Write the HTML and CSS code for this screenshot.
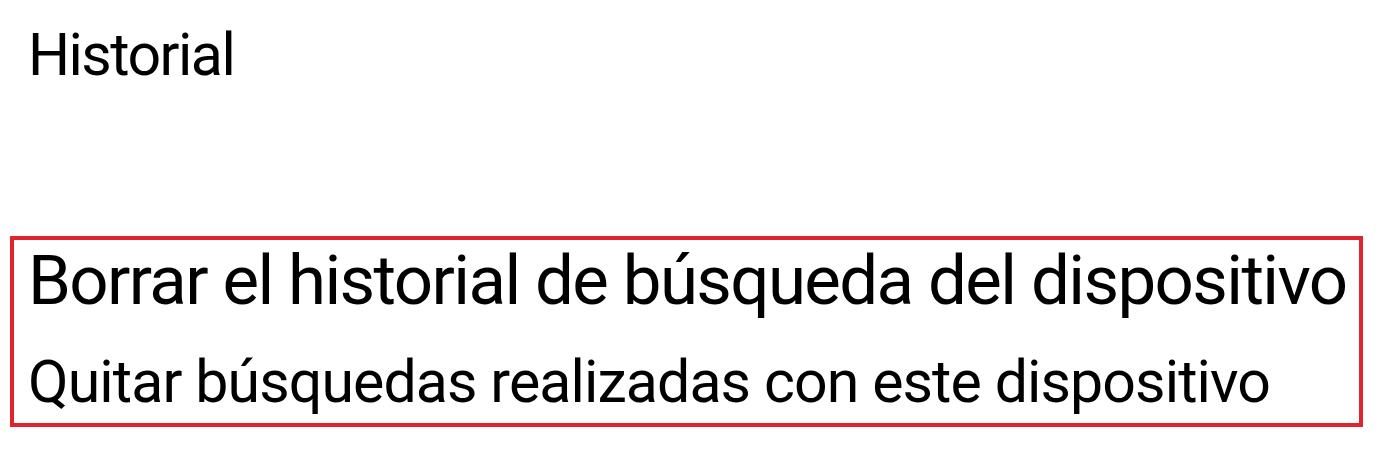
FILE: index.html
```html
<!DOCTYPE html>
<html lang="es">
<head>
    <meta charset="UTF-8">
    <meta name="viewport" content="width=device-width, initial-scale=1.0">
    <title>Historial</title>
    <link rel="stylesheet" href="styles.css">
</head>
<body>
    <h1 class="section-title">Historial</h1>

    <div class="pref-item">
        <div class="pref-title">Borrar el historial de búsqueda del dispositivo</div>
        <div class="pref-summary">Quitar búsquedas realizadas con este dispositivo</div>
    </div>
</body>
</html>
```

FILE: styles.css
```css
body { margin: 0; padding: 0; background: #fff; color: #000; font-family: Roboto, "Noto Sans", sans-serif; }
.section-title { margin: 0; padding: 20px 0 0 28px; font-size: 59px; font-weight: 400; line-height: 70px; letter-spacing: -0.026em; }
.pref-item { margin: 146px 0 0 10px; width: 1331px; height: 183px; border: 4px solid #e1232e; padding-left: 14px; white-space: nowrap; }
.pref-title { font-size: 69px; line-height: 80px; margin-top: 1px; letter-spacing: -0.0235em; }
.pref-summary { font-size: 59px; line-height: 70px; margin-top: 26px; letter-spacing: -0.015em; }
```
